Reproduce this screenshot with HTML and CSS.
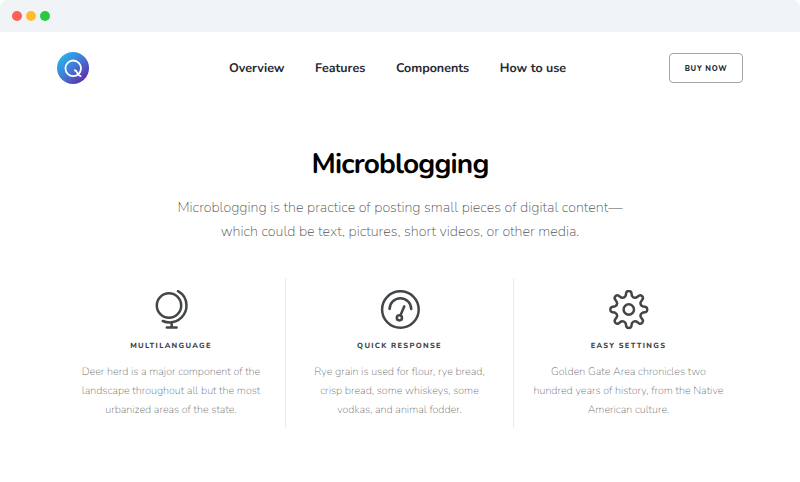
FILE: index.html
```html
<!DOCTYPE html>
<html lang="en">
<head>
<meta charset="utf-8">
<title>Microblogging</title>
<link rel="stylesheet" href="styles.css">
</head>
<body>
<div class="window">
  <div class="titlebar"><i class="dot red"></i><i class="dot yellow"></i><i class="dot green"></i></div>
  <header class="header">
    <svg class="logo" viewBox="0 0 32 32">
      <defs><linearGradient id="brand" x1="0.1" y1="0.1" x2="0.9" y2="0.9"><stop offset="0" stop-color="#27b5ed"/><stop offset="0.5" stop-color="#4278d4"/><stop offset="1" stop-color="#6128aa"/></linearGradient></defs>
      <circle cx="16" cy="16" r="16" fill="url(#brand)"/>
      <g fill="none" stroke="#fff" stroke-width="1.8"><circle cx="16.2" cy="16.3" r="7.8"/><path d="M17.2 18C19.3 18.3 19.9 19.6 20.7 21.4C21.4 23.1 22.2 24.1 24.3 24.3"/></g>
    </svg>
    <nav class="nav"><a>Overview</a><a>Features</a><a>Components</a><a>How to use</a></nav>
    <button class="buy">BUY NOW</button>
  </header>
  <main>
    <h1>Microblogging</h1>
    <p class="lead">Microblogging is the practice of posting small pieces of digital content—<br>which could be text, pictures, short videos, or other media.</p>
    <section class="features">
      <article class="feature">
        <svg class="icon" viewBox="0 0 40 40"><circle cx="18" cy="15.5" r="12.2"/><path d="M27 1.2C32.2 4.1 35.5 9.4 35.5 15.6C35.5 24.9 28 32.4 18.7 32.4C16.2 32.4 13.9 31.9 11.8 31M20.7 33v4.6M15.8 37.6h9.8"/></svg>
        <h2>MULTILANGUAGE</h2>
        <p>Deer herd is a major component of the<br>landscape throughout all but the most<br>urbanized areas of the state.</p>
      </article>
      <article class="feature">
        <svg class="icon" viewBox="0 0 40 40"><circle cx="20.4" cy="19.5" r="18.3"/><path d="M9.6 19a10.8 10.8 0 0 1 21.6 0M24.3 16.3l-3.8 9"/><circle cx="19.4" cy="27.8" r="2.6"/></svg>
        <h2>QUICK RESPONSE</h2>
        <p>Rye grain is used for flour, rye bread,<br>crisp bread, some whiskeys, some<br>vodkas, and animal fodder.</p>
      </article>
      <article class="feature">
        <svg class="icon" viewBox="-19.8 -19.5 40 40"><circle r="5.2"/><path d="M-3.2-13.6L-2.5-17Q-2-18.5 0-18.5Q2-18.5 2.5-17L3.2-13.6Q4.8-11 7.4-11.9L10.2-13.8Q11.8-14.7 13.3-13.3Q14.7-11.8 13.8-10.2L11.9-7.4Q11-4.8 13.6-3.2L17-2.5Q18.5-2 18.5 0Q18.5 2 17 2.5L13.6 3.2Q11 4.8 11.9 7.4L13.8 10.2Q14.7 11.8 13.3 13.3Q11.8 14.7 10.2 13.8L7.4 11.9Q4.8 11 3.2 13.6L2.5 17Q2 18.5 0 18.5Q-2 18.5-2.5 17L-3.2 13.6Q-4.8 11-7.4 11.9L-10.2 13.8Q-11.8 14.7-13.3 13.3Q-14.7 11.8-13.8 10.2L-11.9 7.4Q-11 4.8-13.6 3.2L-17 2.5Q-18.5 2-18.5 0Q-18.5-2-17-2.5L-13.6-3.2Q-11-4.8-11.9-7.4L-13.8-10.2Q-14.7-11.8-13.3-13.3Q-11.8-14.7-10.2-13.8L-7.4-11.9Q-4.8-11-3.2-13.6Z"/></svg>
        <h2>EASY SETTINGS</h2>
        <p>Golden Gate Area chronicles two<br>hundred years of history, from the Native<br>American culture.</p>
      </article>
    </section>
  </main>
</div>
</body>
</html>
```

FILE: styles.css
```css
* { box-sizing: border-box; }
body { margin: 0; background: #fff; font-family: Nunito, Lato, sans-serif; text-rendering: geometricPrecision; }
.window { height: 482px; overflow: hidden; }
.titlebar { height: 32px; display: flex; align-items: center; gap: 4px; padding: 0 12px; background: #f0f4f7; border-radius: 7px 7px 0 0; }
.dot { width: 10px; height: 10px; border-radius: 50%; }
.red { background: #ff5f57; }
.yellow { background: #ffbd2e; }
.green { background: #28c941; }
.header { height: 72px; padding: 0 57px; display: flex; align-items: center; }
.logo { width: 32px; height: 32px; }
.nav { display: flex; gap: 30.6px; margin-left: 140px; padding-top: 2px; color: #252932; font-size: 12.52px; font-weight: 700; line-height: 18px; white-space: nowrap; }
.buy { margin-left: auto; width: 74px; height: 30px; padding: 1px 0 0 0; border: 1px solid #a3a3a5; border-radius: 4px; background: #fff; color: #252932; font: 800 7.5px Nunito, Lato, sans-serif; letter-spacing: .75px; white-space: nowrap; }
main { text-align: center; }
h1 { margin: 40px 0 0; font-size: 28px; font-weight: 700; letter-spacing: -.8px; line-height: 40px; color: #000; }
.lead { margin: 13px 0 0; font-size: 14.34px; font-weight: 200; line-height: 24px; color: #555; white-space: nowrap; }
.features { margin: 33px 57px 0; display: grid; grid-template-columns: 229px 228px 229px; height: 150px; }
.feature { border-right: 1px solid #ebebeb; padding-top: 12px; white-space: nowrap; }
.feature:last-child { border-right: 0; }
.icon { display: block; width: 40px; height: 40px; margin: 0 auto; fill: none; stroke: #434649; stroke-width: 2.5; stroke-linecap: round; stroke-linejoin: round; }
h2 { margin: 10px 0 0; font-size: 7.5px; line-height: 12px; font-weight: 800; letter-spacing: 1.3px; color: #404347; }
.feature p { margin: 10px 0 0; font-size: 10.8px; line-height: 19px; font-weight: 200; color: #707070; }
```
